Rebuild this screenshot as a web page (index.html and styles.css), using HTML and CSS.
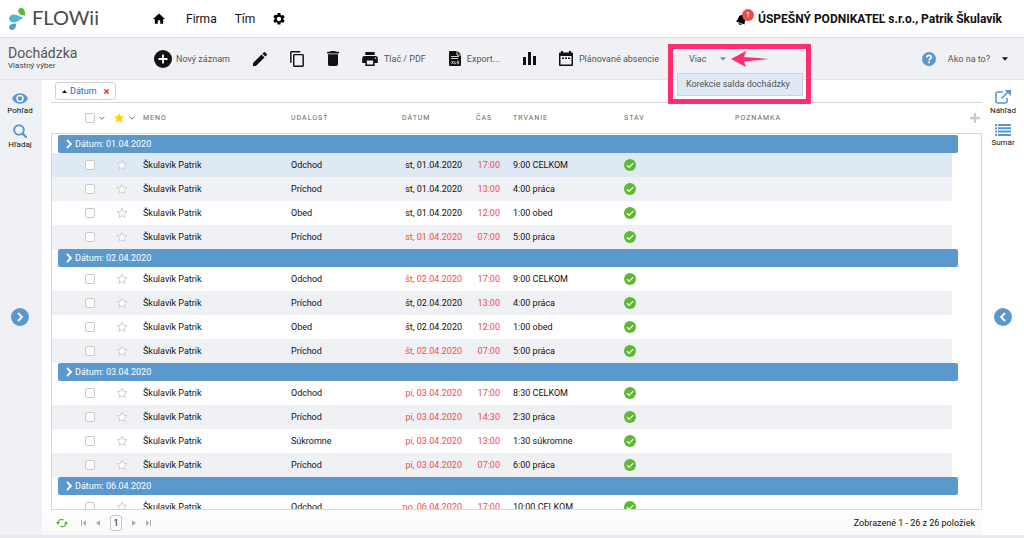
FILE: index.html
```html
<!DOCTYPE html>
<html lang="sk">
<head>
    <meta charset="UTF-8">
    <meta name="viewport" content="width=device-width, initial-scale=1.0">
    <title>FLOWii - Dochádzka</title>
    <link rel="stylesheet" href="styles.css">
</head>
<body>
    <svg class="sprite" aria-hidden="true">
        <symbol id="i-star" viewBox="0 0 24 24"><path d="M12 17.3l6.2 3.7-1.6-7L22 9.2l-7.2-.6L12 2 9.2 8.6 2 9.2 7.500 14l-1.7 7z"/></symbol>
        <symbol id="i-check" viewBox="0 0 24 24"><circle cx="12" cy="12" r="12" fill="#5cb932"/><path d="M6 12.5l4.2 4.2L18.5 8.4" fill="none" stroke="#fff" stroke-width="2.4"/></symbol>
        <symbol id="i-down" viewBox="0 0 10 6"><path d="M1 1l4 4 4-4" fill="none" stroke="currentColor" stroke-width="1.6"/></symbol>
        <symbol id="i-right" viewBox="0 0 6 10"><path d="M1 1l4 4-4 4" fill="none" stroke="currentColor" stroke-width="1.8"/></symbol>
        <symbol id="i-caret" viewBox="0 0 10 6"><path d="M0 0h10L5 6z"/></symbol>
    </svg>

    <header class="header">
        <a class="logo" href="#">
            <svg viewBox="0 0 18 22" aria-hidden="true">
                <path d="M17.300 7.500C12.500 7.500 10 5.500 10.200 2.500 10.600-.5 14.500-.7 16 1.500c1.200 1.800.8 3.500 1.300 6z" fill="#5cb932"/>
                <path d="M15.500 9.800c-3 1-5.500 4.700-9.500 4.700-3 0-5-1.800-5-4s2-4 4.800-4c4 0 6.700 2.800 9.700 3.300z" fill="#4db8d0"/>
                <path d="M8.500 15.200c-.7 1.800-.3 3.500-1.500 5.300-1.500 2-4.500 2-5.500.3-1.200-2 0-4.300 2.500-4.800 1.700-.4 3-.2 4.500-.8z" fill="#5b98cd"/>
            </svg>
            <span>FLOWii</span>
        </a>
        <nav class="nav">
            <a class="home" href="#" aria-label="Domov"><svg width="12" height="12" viewBox="2 3 20 18"><path d="M10 20v-6h4v6h5v-8h3L12 3 2 12h3v8z"/></svg></a>
            <a href="#">Firma</a>
            <a href="#">Tím</a>
            <a href="#" aria-label="Nastavenia"><svg width="12" height="12" viewBox="2 2 20 20"><path d="M19.140 12.940c.04-.3.06-.61.06-.94s-.02-.64-.07-.94l2.030-1.580c.18-.14.23-.41.12-.61l-1.920-3.320c-.12-.22-.37-.29-.59-.22l-2.390.96c-.5-.38-1.030-.7-1.620-.94l-.36-2.540A.48.48 0 0 0 13.920 2h-3.840c-.24 0-.43.17-.47.41l-.36 2.540c-.59.24-1.130.57-1.620.94l-2.390-.96c-.22-.08-.47 0-.59.22L2.740 8.470c-.12.21-.08.47.12.61l2.030 1.580c-.05.3-.09.63-.09.94s.02.64.07.94l-2.030 1.580c-.18.14-.23.41-.12.61l1.920 3.320c.12.22.37.29.59.22l2.390-.96c.5.38 1.030.7 1.620.94l.36 2.540c.05.24.24.41.48.41h3.840c.24 0 .44-.17.47-.41l.36-2.540c.59-.24 1.130-.56 1.620-.94l2.390.96c.22.08.47 0 .59-.22l1.920-3.320c.12-.22.07-.47-.12-.61zM12 15.600A3.600 3.600 0 1 1 12 8.400a3.600 3.600 0 0 1 0 7.200z"/></svg></a>
        </nav>
        <div class="account">
            <button class="bell" aria-label="Upozornenia">
                <svg width="12" height="12" viewBox="0 0 12 12"><path d="M7 2C3.500 1.500 2.500 4 2 6L0 8.500 8.500 11.500 8.800 8.500 11 4z"/><path d="M2.500 10l3.500 1.200c-1 1.200-3.200.8-3.500-1.200z"/></svg>
                <span class="badge">1</span>
            </button>
            <span>ÚSPEŠNÝ PODNIKATEĽ s.r.o., Patrik Škulavík</span>
        </div>
    </header>

    <div class="toolbar">
        <div class="heading">
            <h1>Dochádzka</h1>
            <p>Vlastný výber</p>
        </div>
        <div class="tools">
            <button class="add"><svg width="18" height="18" viewBox="0 0 18 18"><circle cx="9" cy="9" r="9"/><path d="M9 4.500v9M4.500 9h9" stroke="#fff" stroke-width="1.800"/></svg>Nový záznam</button>
            <button aria-label="Upraviť"><svg width="14" height="14" viewBox="3 3 18 18"><path d="M3 17.250V21h3.750L17.810 9.940l-3.750-3.750zM20.710 7.040a1 1 0 0 0 0-1.410l-2.340-2.340a1 1 0 0 0-1.410 0l-1.830 1.830 3.750 3.750z"/></svg></button>
            <button aria-label="Kopírovať"><svg width="14" height="16" viewBox="2 1 19 22"><path d="M16 1H4a2 2 0 0 0-2 2v14h2V3h12zm3 4H8a2 2 0 0 0-2 2v14c0 1.100.9 2 2 2h11a2 2 0 0 0 2-2V7a2 2 0 0 0-2-2zm0 16H8V7h11z"/></svg></button>
            <button aria-label="Zmazať"><svg width="12" height="15" viewBox="5 3 14 18"><path d="M6 19c0 1.100.9 2 2 2h8a2 2 0 0 0 2-2V7H6zM19 4h-3.500l-1-1h-5l-1 1H5v2h14z"/></svg></button>
            <button><svg width="16" height="14" viewBox="2 3 20 18"><path d="M19 8H5a3 3 0 0 0-3 3v6h4v4h12v-4h4v-6a3 3 0 0 0-3-3zm-3 11H8v-5h8zm3-7a1 1 0 1 1 0-2 1 1 0 0 1 0 2zM18 3H6v4h12z"/></svg>Tlač / PDF</button>
            <button class="export"><svg width="12" height="15" viewBox="0 0 12 15"><path d="M1 0h7.500L12 3.500V14a1 1 0 0 1-1 1H1a1 1 0 0 1-1-1V1a1 1 0 0 1 1-1z"/><path d="M8 0v4h4M2 5.500h8M2 7.500h7" stroke="#fff" stroke-width=".8" fill="none"/><path d="M2.500 10l2 3m0-3l-2 3M5.800 10v2.700h1.400M9.800 10.300H8.300v1.200h1.400v1.200H8.200" stroke="#fff" stroke-width=".7" fill="none"/></svg>Export...</button>
            <button aria-label="Grafy"><svg width="13" height="13" viewBox="0 0 13 13"><path d="M0 5h3v8H0zM5 0h3v13H5zM10 4h3v9h-3z"/></svg></button>
            <button><svg width="14" height="15" viewBox="0 0 14 15"><path fill-rule="evenodd" d="M2 0h2v1.500h6V0h2v1.500h1a1 1 0 0 1 1 1V14a1 1 0 0 1-1 1H1a1 1 0 0 1-1-1V2.500a1 1 0 0 1 1-1h1zM1.500 5v8.500h11V5z"/><path d="M3 6.500h2v1.500H3zM6 6.500h2v1.500H6zM9 6.500h2v1.500H9z"/></svg>Plánované absencie</button>
            <div class="more">
                <button class="more-btn">Viac <svg class="blue" width="6" height="4"><use href="#i-caret"/></svg></button>
                <a class="more-item" href="#">Korekcie salda dochádzky</a>
                <div class="marker">
                    <svg width="38" height="16" viewBox="0 0 38 16" aria-hidden="true"><path d="M0 8L15 0l-2 6L38 8l-25 2.500L15 16z"/></svg>
                </div>
            </div>
        </div>
        <button class="help"><svg width="14" height="14" viewBox="0 0 14 14"><circle cx="7" cy="7" r="7"/><path d="M4.900 5.500c0-2.800 4.300-2.700 4.300-.2 0 1.500-2.100 1.600-2.100 3.200M7.100 9.600v1.600" fill="none" stroke="#fff" stroke-width="1.700"/></svg>Ako na to? <svg class="dark" width="6" height="4"><use href="#i-caret"/></svg></button>
    </div>

    <div class="layout">
        <aside class="side left">
            <button><svg width="16" height="11" viewBox="0 0 16 11"><path d="M0 5.500C3-1.500 13-1.500 16 5.500 13 12.500 3 12.500 0 5.500z"/><circle cx="8" cy="5.500" r="3" fill="#5b98cd" stroke="#fff" stroke-width="1.400"/></svg>Pohľad</button>
            <button><svg width="14" height="14" viewBox="0 0 14 14"><path d="M9.500 9.500L13 13" stroke="#5b98cd" stroke-width="2.400" stroke-linecap="round"/><circle cx="6" cy="6" r="4.800" fill="none" stroke="#5b98cd" stroke-width="2"/></svg>Hľadaj</button>
            <button class="slide" aria-label="Rozbaliť ľavý panel"><svg width="6" height="10"><use href="#i-right"/></svg></button>
        </aside>

        <main class="content">
            <div class="groupby">
                <div class="chip">
                    <svg class="dark" width="5" height="3" viewBox="0 0 10 6"><path d="M0 6h10L5 0z"/></svg>
                    <a href="#">Dátum</a>
                    <button aria-label="Odstrániť"><svg width="5" height="5" viewBox="0 0 6 6"><path d="M.5.500l5 5m0-5l-5 5" stroke="#e53935" stroke-width="1.800"/></svg></button>
                </div>
            </div>

            <div class="columns">
                <table class="grid">
                    <colgroup><col class="c-check"><col class="c-star"><col class="c-name"><col class="c-event"><col class="c-date"><col class="c-time"><col class="c-length"><col class="c-state"><col></colgroup>
                    <thead>
                        <tr>
                            <th class="check"><input type="checkbox" aria-label="Vybrať všetko"><svg width="6" height="4"><use href="#i-down"/></svg></th>
                            <th class="fav"><svg class="gold" width="12" height="12"><use href="#i-star"/></svg><svg width="6" height="4"><use href="#i-down"/></svg></th>
                            <th>Meno</th>
                            <th>Udalosť</th>
                            <th>Dátum</th>
                            <th>Čas</th>
                            <th>Trvanie</th>
                            <th>Stav</th>
                            <th>Poznámka</th>
                        </tr>
                    </thead>
                </table>
                <button class="add-col" aria-label="Pridať stĺpec"><svg width="10" height="10" viewBox="0 0 10 10"><path d="M5 0v10M0 5h10" stroke="#ccc" stroke-width="2.400"/></svg></button>
            </div>

            <div class="panel">
                <table class="grid">
                    <colgroup><col class="c-check"><col class="c-star"><col class="c-name"><col class="c-event"><col class="c-date"><col class="c-time"><col class="c-length"><col class="c-state"><col></colgroup>
                    <tbody id="rows"></tbody>
                </table>
            </div>

            <footer class="pager">
                <button aria-label="Obnoviť"><svg width="12" height="10" viewBox="0 0 12 10"><path d="M2 5c0-3 3-4.500 5.500-3.200M10 5c0 3-3 4.500-5.500 3.200" fill="none" stroke="#5cb932" stroke-width="1.300"/><path d="M0 4h4L2 7zM8 6h4l-2-3z" fill="#5cb932"/></svg></button>
                <button aria-label="Prvá"><svg width="5" height="6" viewBox="0 0 5 6"><path d="M0 0h1v6H0zM5 0v6L1.500 3z"/></svg></button>
                <button aria-label="Predošlá"><svg width="4" height="6" viewBox="0 0 4 6"><path d="M4 0v6L0 3z"/></svg></button>
                <button class="page">1</button>
                <button aria-label="Ďalšia"><svg width="4" height="6" viewBox="0 0 4 6"><path d="M0 0v6l4-3z"/></svg></button>
                <button aria-label="Posledná"><svg width="5" height="6" viewBox="0 0 5 6"><path d="M4 0h1v6H4zM0 0v6l3.500-3z"/></svg></button>
                <span class="total">Zobrazené 1 - 26 z 26 položiek</span>
            </footer>
        </main>

        <aside class="side right">
            <button><svg width="16" height="14" viewBox="0 0 16 14"><path d="M8 2H3a2 2 0 0 0-2 2v7a2 2 0 0 0 2 2h7a2 2 0 0 0 2-2V8M6.500 8.500L13 2" fill="none" stroke="#5b98cd" stroke-width="1.600"/><path d="M9.500 0H16v6z"/></svg>Náhľad</button>
            <button><svg width="16" height="12" viewBox="0 0 16 12"><path d="M0 0h2v2H0zM3 0h13v2H3zM0 3.300h2v2H0zM3 3.300h13v2H3zM0 6.600h2v2H0zM3 6.600h13v2H3zM0 10h2v2H0zM3 10h13v2H3z"/></svg>Sumár</button>
            <button class="slide" aria-label="Rozbaliť pravý panel"><svg width="6" height="10" viewBox="0 0 6 10"><path d="M5 1L1 5l4 4" fill="none" stroke="#fff" stroke-width="1.800"/></svg></button>
        </aside>
    </div>

    <script src="script.js"></script>
</body>
</html>
```
FILE: styles.css
```css
* {
    margin: 0;
    padding: 0;
    box-sizing: border-box;
}

body {
    display: flex;
    flex-direction: column;
    height: 100vh;
    overflow: hidden;
    background: #ffffff;
    border-bottom: 3px solid #e9e9f0;
    font-family: Roboto, "Liberation Sans", sans-serif;
    font-size: 9px;
    color: #111111;
}

a {
    color: inherit;
    text-decoration: none;
}

button {
    display: flex;
    align-items: center;
    border: none;
    background: none;
    font: inherit;
    color: inherit;
    cursor: pointer;
}

svg {
    flex-shrink: 0;
    display: block;
}

.sprite {
    position: absolute;
    width: 0;
    height: 0;
}

/* Header */
.header {
    display: flex;
    align-items: center;
    height: 38px;
    padding: 0 22px 0 8px;
    border-bottom: 1px solid #dcdce0;
}

.logo {
    display: flex;
    align-items: center;
    gap: 6px;
    width: 145px;
    font-family: Lato, sans-serif;
    font-size: 20px;
    line-height: 22px;
    color: #4a4a4a;
}

.logo svg {
    width: 18px;
    height: 22px;
}

.logo span {
    padding-bottom: 4px;
}

.nav {
    display: flex;
    align-items: center;
    gap: 18px;
    font-size: 12px;
}

.nav .home {
    margin-right: 3px;
}

.account {
    display: flex;
    align-items: center;
    gap: 4px;
    margin-left: auto;
    font-size: 12px;
    font-weight: 700;
}

.bell {
    position: relative;
    width: 18px;
    height: 16px;
}

.badge {
    position: absolute;
    top: -2px;
    right: 0;
    width: 12px;
    height: 12px;
    border-radius: 50%;
    background: #ee4b4f;
    font-size: 8px;
    font-weight: 400;
    line-height: 12px;
    color: #ffffff;
}

/* Toolbar */
.toolbar {
    display: flex;
    align-items: center;
    height: 42px;
    padding: 0 16px 0 8px;
    background: #f0f1f5;
    border-bottom: 1px solid #ece2e4;
    color: #555555;
}

.heading {
    width: 146px;
}

.heading h1 {
    font-size: 14px;
    font-weight: 400;
    line-height: 14px;
}

.heading p {
    font-size: 8px;
    line-height: 11px;
    color: #444444;
}

.tools {
    display: flex;
    align-items: center;
    gap: 23px;
}

.tools button {
    gap: 6px;
}

.tools svg {
    fill: #111111;
}

.tools .add {
    gap: 4px;
}

.more {
    position: relative;
    margin-left: 7px;
}

.tools .more-btn {
    gap: 14px;
}

.tools .blue {
    fill: #5b98cd;
}

.more-item {
    position: absolute;
    top: 19px;
    left: -12px;
    height: 23px;
    padding: 0 12px 0 8px;
    border: 1px solid #d0d4da;
    background: #dfe9f4;
    line-height: 21px;
    white-space: nowrap;
}

/* Highlight around the menu */
.marker {
    position: absolute;
    top: -10px;
    left: -21px;
    width: 143px;
    height: 60px;
    padding: 2px 58px;
    border: 5px solid #ff2d6f;
    border-radius: 1px;
    pointer-events: none;
}

.tools .marker svg {
    fill: #ff2d6f;
}

.help {
    gap: 12px;
    margin-left: auto;
    fill: #5b98cd;
}

.help .dark,
.chip .dark {
    fill: #111111;
}

/* Page body */
.layout {
    display: flex;
    flex: 1;
    min-height: 0;
}

.side {
    position: relative;
    display: flex;
    flex-direction: column;
    align-items: center;
    gap: 9px;
    width: 42px;
    padding: 13px 2px 0 0;
    font-size: 8px;
    fill: #5b98cd;
}

.side button {
    flex-direction: column;
    gap: 2px;
}

.left {
    background: #f0f1f5;
}

.right {
    padding: 10px 0 0;
}

.side .slide {
    position: absolute;
    top: 50%;
    justify-content: center;
    width: 18px;
    height: 18px;
    border-radius: 50%;
    background: #5b98cd;
    color: #ffffff;
}

.content {
    display: flex;
    flex: 1;
    flex-direction: column;
    min-width: 0;
    padding-left: 9px;
    background: linear-gradient(#ffffff 94%, #f8f8f8);
}

.groupby {
    display: flex;
    align-items: center;
    height: 23px;
    padding-left: 4px;
    border-bottom: 1px solid #d8d8d8;
}

.chip {
    display: flex;
    align-items: center;
    gap: 3px;
    height: 18px;
    padding: 0 6px;
    border: 1px solid #d0d0d0;
    border-radius: 3px;
}

.chip a {
    color: #2962d9;
}

.chip button {
    margin-left: 4px;
}

/* Grid */
.columns {
    display: flex;
    align-items: center;
    height: 30px;
    padding-left: 1px;
}

.grid {
    flex: 1;
    width: 100%;
    table-layout: fixed;
    border-collapse: collapse;
}

.c-check {
    width: 61px;
}

.c-star {
    width: 30px;
}

.c-name {
    width: 148px;
}

.c-event,
.c-length,
.c-state {
    width: 111px;
}

.c-date {
    width: 74px;
}

.c-time {
    width: 37px;
}

.grid th {
    font-size: 7px;
    font-weight: 400;
    letter-spacing: 1px;
    text-align: left;
    text-transform: uppercase;
    color: #666666;
}

.grid th svg,
.grid input {
    display: inline-block;
    vertical-align: middle;
}

.grid input {
    appearance: none;
    width: 10px;
    height: 10px;
    border: 1px solid #c8c8c8;
    border-radius: 2px;
    background: #ffffff;
}

.grid .check {
    padding-left: 33px;
}

.grid th.check svg,
.grid th.fav svg + svg {
    margin-left: 4px;
}

.grid .gold {
    fill: #ffd200;
}

.add-col {
    margin: 0 2px 0 19px;
}

.panel {
    flex: 1;
    min-height: 0;
    overflow: hidden;
    padding: 1px 29px 0 0;
    border: 1px solid #d8d8d8;
}

.grid td {
    height: 24px;
    white-space: nowrap;
}

.grid tr.odd {
    background: #f0f1f5;
}

.grid tr.selected {
    background: #dfe9f4;
}

.grid td.group {
    height: 18px;
}

.group button {
    gap: 3px;
    width: 100%;
    height: 18px;
    margin-left: 6px;
    padding-left: 8px;
    border-radius: 2px;
    background: #5b98cd;
    color: #ffffff;
}

.grid td.fav {
    padding-left: 3px;
}

.fav .star {
    fill: #ffffff;
    stroke: #d0d0d0;
    stroke-width: 2px;
}

.grid td.date {
    padding-right: 14px;
    text-align: right;
}

.grid td.time {
    padding-right: 13px;
    text-align: right;
}

.grid td.red {
    color: #f04a4f;
}

/* Pager */
.pager {
    display: flex;
    align-items: center;
    gap: 10px;
    height: 25px;
    padding: 0 7px 0 5px;
    fill: #b0b0b0;
}

.pager button:first-child {
    margin-right: 3px;
}

.pager .page {
    justify-content: center;
    width: 12px;
    height: 16px;
    border: 1px solid #c4c4c4;
    border-radius: 3px;
}

.total {
    margin-left: auto;
}
```
FILE: script.js
```js
// day label, then rows: event, time, duration, date in red
const days = [
    { date: '01.04.2020', day: 'st', rows: [
        ['Odchod', '17:00', '9:00 CELKOM', false],
        ['Príchod', '13:00', '4:00 práca', false],
        ['Obed', '12:00', '1:00 obed', false],
        ['Príchod', '07:00', '5:00 práca', true]
    ] },
    { date: '02.04.2020', day: 'št', rows: [
        ['Odchod', '17:00', '9:00 CELKOM', true],
        ['Príchod', '13:00', '4:00 práca', false],
        ['Obed', '12:00', '1:00 obed', false],
        ['Príchod', '07:00', '5:00 práca', true]
    ] },
    { date: '03.04.2020', day: 'pi', rows: [
        ['Odchod', '17:00', '8:30 CELKOM', true],
        ['Príchod', '14:30', '2:30 práca', true],
        ['Súkromne', '13:00', '1:30 súkromne', true],
        ['Príchod', '07:00', '6:00 práca', true]
    ] },
    { date: '06.04.2020', day: 'po', rows: [
        ['Odchod', '17:00', '10:00 CELKOM', true]
    ] }
];

let html = '';
days.forEach((d, g) => {
    html += `<tr><td class="group" colspan="9"><button><svg width="6" height="10"><use href="#i-right"/></svg>Dátum: ${d.date}</button></td></tr>`;
    d.rows.forEach(([event, time, length, red], i) => {
        const cls = g === 0 && i === 0 ? 'selected' : (i % 2 ? 'odd' : '');
        html += `<tr class="${cls}">
            <td class="check"><input type="checkbox" aria-label="Vybrať"></td>
            <td class="fav"><svg class="star" width="12" height="12"><use href="#i-star"/></svg></td>
            <td>Škulavík Patrik</td>
            <td>${event}</td>
            <td class="date${red ? ' red' : ''}">${d.day}, ${d.date}</td>
            <td class="time red">${time}</td>
            <td>${length}</td>
            <td><svg width="12" height="12"><use href="#i-check"/></svg></td>
            <td></td>
        </tr>`;
    });
});
document.getElementById('rows').innerHTML = html;
```
